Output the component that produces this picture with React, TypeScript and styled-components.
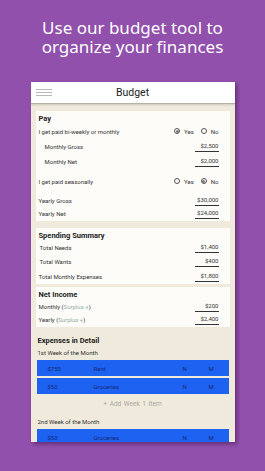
import React from "react";
import styled, { createGlobalStyle } from "styled-components";

const Global = createGlobalStyle`
  html, body { margin: 0; padding: 0; }
  body { background: #9150ac; }
  * { box-sizing: border-box; }
`;

const Page = styled.div`
  width: 265px;
  height: 471px;
  background: #9150ac;
  display: flex;
  flex-direction: column;
  align-items: center;
  overflow: hidden;
  font-family: Roboto, "Liberation Sans", sans-serif;
`;

const Headline = styled.h1`
  margin: 18px 0 0;
  font-family: "Noto Sans", "Open Sans", sans-serif;
  font-weight: 400;
  font-size: 17px;
  line-height: 19px;
  color: #ffffff;
  text-align: center;
`;

const Phone = styled.div`
  margin-top: 26px;
  width: 204px;
  height: 360px;
  background: #efeadc;
  box-shadow: 2px 2px 4px rgba(40, 0, 50, 0.45);
  display: flex;
  flex-direction: column;
  overflow: hidden;
`;

const AppBar = styled.div`
  height: 22px;
  flex: none;
  background: #ffffff;
  border-bottom: 1px solid #b9b2a2;
  box-shadow: 0 1px 2px rgba(0, 0, 0, 0.15);
  display: flex;
  align-items: center;
  position: relative;
  padding-left: 5px;
`;

const Burger = styled.div`
  width: 16px;
  display: flex;
  flex-direction: column;
  gap: 1.6px;
  span {
    display: block;
    height: 1px;
    background: #b7b7b7;
  }
`;

const AppTitle = styled.div`
  position: absolute;
  left: 0;
  right: 0;
  text-align: center;
  font-size: 10.5px;
  color: #222;
`;

const Content = styled.div`
  padding: 7px 5px 0;
  display: flex;
  flex-direction: column;
`;

const Card = styled.div<{ $mt?: number }>`
  margin-top: ${(p) => p.$mt ?? 0}px;
  background: #fdfcf9;
  padding: 3px 11px 2px 3px;
  display: flex;
  flex-direction: column;
`;

const CardTitle = styled.div`
  height: 10px;
  line-height: 10px;
  font-size: 7.5px;
  font-weight: 700;
  color: #222;
`;

const Row = styled.div<{ $mt?: number; $h?: number; $indent?: number }>`
  margin-top: ${(p) => p.$mt ?? 0}px;
  height: ${(p) => p.$h ?? 12}px;
  padding-left: ${(p) => p.$indent ?? 0}px;
  display: flex;
  align-items: center;
  justify-content: space-between;
  font-size: 6px;
  color: #333;
`;

const Label = styled.span``;

const Surplus = styled.span`
  color: #8fb0a6;
`;

const Value = styled.span<{ $w?: number }>`
  width: ${(p) => p.$w ?? 24}px;
  text-align: right;
  border-bottom: 1px solid #333;
  line-height: 8px;
  padding-bottom: 1px;
  transform: translateY(1px);
`;

const Radios = styled.div`
  display: flex;
  align-items: center;
`;

const RadioItem = styled.span<{ $ml?: number }>`
  margin-left: ${(p) => p.$ml ?? 0}px;
  display: flex;
  align-items: center;
  gap: 4px;
`;

const Circle = styled.span<{ $on?: boolean }>`
  width: 6px;
  height: 6px;
  border-radius: 50%;
  border: 0.8px solid #555;
  display: flex;
  align-items: center;
  justify-content: center;
  &::after {
    content: "";
    width: 3px;
    height: 3px;
    border-radius: 50%;
    background: ${(p) => (p.$on ? "#777" : "transparent")};
  }
`;

const SectionHead = styled.div<{ $mt?: number }>`
  margin-top: ${(p) => p.$mt ?? 0}px;
  height: 10px;
  line-height: 10px;
  padding-left: 2px;
  font-size: 7.5px;
  font-weight: 700;
  color: #222;
`;

const WeekLabel = styled.div<{ $mt?: number }>`
  margin-top: ${(p) => p.$mt ?? 0}px;
  height: 10px;
  line-height: 10px;
  padding-left: 2px;
  font-size: 6px;
  color: #333;
`;

const ExpenseRow = styled.div<{ $mt?: number }>`
  margin: ${(p) => p.$mt ?? 0}px 1px 0;
  height: 16px;
  flex: none;
  background: #1d62f0;
  display: grid;
  grid-template-columns: 46px 1fr 26px 12px;
  align-items: center;
  padding: 0 8px 0 11px;
  font-size: 6px;
  color: #16297a;
`;

const AddItem = styled.div<{ $mt?: number }>`
  margin-top: ${(p) => p.$mt ?? 0}px;
  height: 14px;
  line-height: 14px;
  text-align: center;
  font-size: 6.5px;
  color: #aaa89f;
  word-spacing: 1px;
`;

const Radio = ({ on, label, ml }: { on?: boolean; label: string; ml?: number }) => (
  <RadioItem $ml={ml}>
    <Circle $on={on} />
    {label}
  </RadioItem>
);

const Expense = ({ amount, name, mt }: { amount: string; name: string; mt?: number }) => (
  <ExpenseRow $mt={mt}>
    <span>{amount}</span>
    <span>{name}</span>
    <span>N</span>
    <span>M</span>
  </ExpenseRow>
);

export default function App() {
  return (
    <>
      <Global />
      <Page>
        <Headline>
          Use our budget tool to
          <br />
          organize your finances
        </Headline>
        <Phone>
          <AppBar>
            <Burger>
              <span />
              <span />
              <span />
            </Burger>
            <AppTitle>Budget</AppTitle>
          </AppBar>
          <Content>
            <Card>
              <CardTitle>Pay</CardTitle>
              <Row $mt={1}>
                <Label>I get paid bi-weekly or monthly</Label>
                <Radios>
                  <Radio on label="Yes" />
                  <Radio label="No" ml={7} />
                </Radios>
              </Row>
              <Row $mt={3} $indent={6}>
                <Label>Monthly Gross</Label>
                <Value>$2,500</Value>
              </Row>
              <Row $mt={3} $indent={6}>
                <Label>Monthly Net</Label>
                <Value>$2,000</Value>
              </Row>
              <Row $mt={8}>
                <Label>I get paid seasonally</Label>
                <Radios>
                  <Radio label="Yes" />
                  <Radio on label="No" ml={7} />
                </Radios>
              </Row>
              <Row $mt={7}>
                <Label>Yearly Gross</Label>
                <Value>$30,000</Value>
              </Row>
              <Row $mt={1}>
                <Label>Yearly Net</Label>
                <Value>$24,000</Value>
              </Row>
            </Card>
            <Card $mt={7}>
              <CardTitle>Spending Summary</CardTitle>
              <Row $indent={1}>
                <Label>Total Needs</Label>
                <Value>$1,400</Value>
              </Row>
              <Row $mt={2} $indent={1}>
                <Label>Total Wants</Label>
                <Value>$400</Value>
              </Row>
              <Row $mt={3}>
                <Label>Total Monthly Expenses</Label>
                <Value>$1,800</Value>
              </Row>
            </Card>
            <Card $mt={3}>
              <CardTitle>Net Income</CardTitle>
              <Row>
                <Label>
                  Monthly (<Surplus>Surplus +</Surplus>)
                </Label>
                <Value>$200</Value>
              </Row>
              <Row $mt={1}>
                <Label>
                  Yearly (<Surplus>Surplus +</Surplus>)
                </Label>
                <Value>$2,400</Value>
              </Row>
            </Card>
            <SectionHead $mt={9}>Expenses in Detail</SectionHead>
            <WeekLabel $mt={2}>1st Week of the Month</WeekLabel>
            <Expense mt={2} amount="$750" name="Rent" />
            <Expense mt={2} amount="$50" name="Groceries" />
            <AddItem $mt={3}>+ Add Week 1 Item</AddItem>
            <WeekLabel $mt={6}>2nd Week of the Month</WeekLabel>
            <Expense mt={2} amount="$50" name="Groceries" />
          </Content>
        </Phone>
      </Page>
    </>
  );
}
